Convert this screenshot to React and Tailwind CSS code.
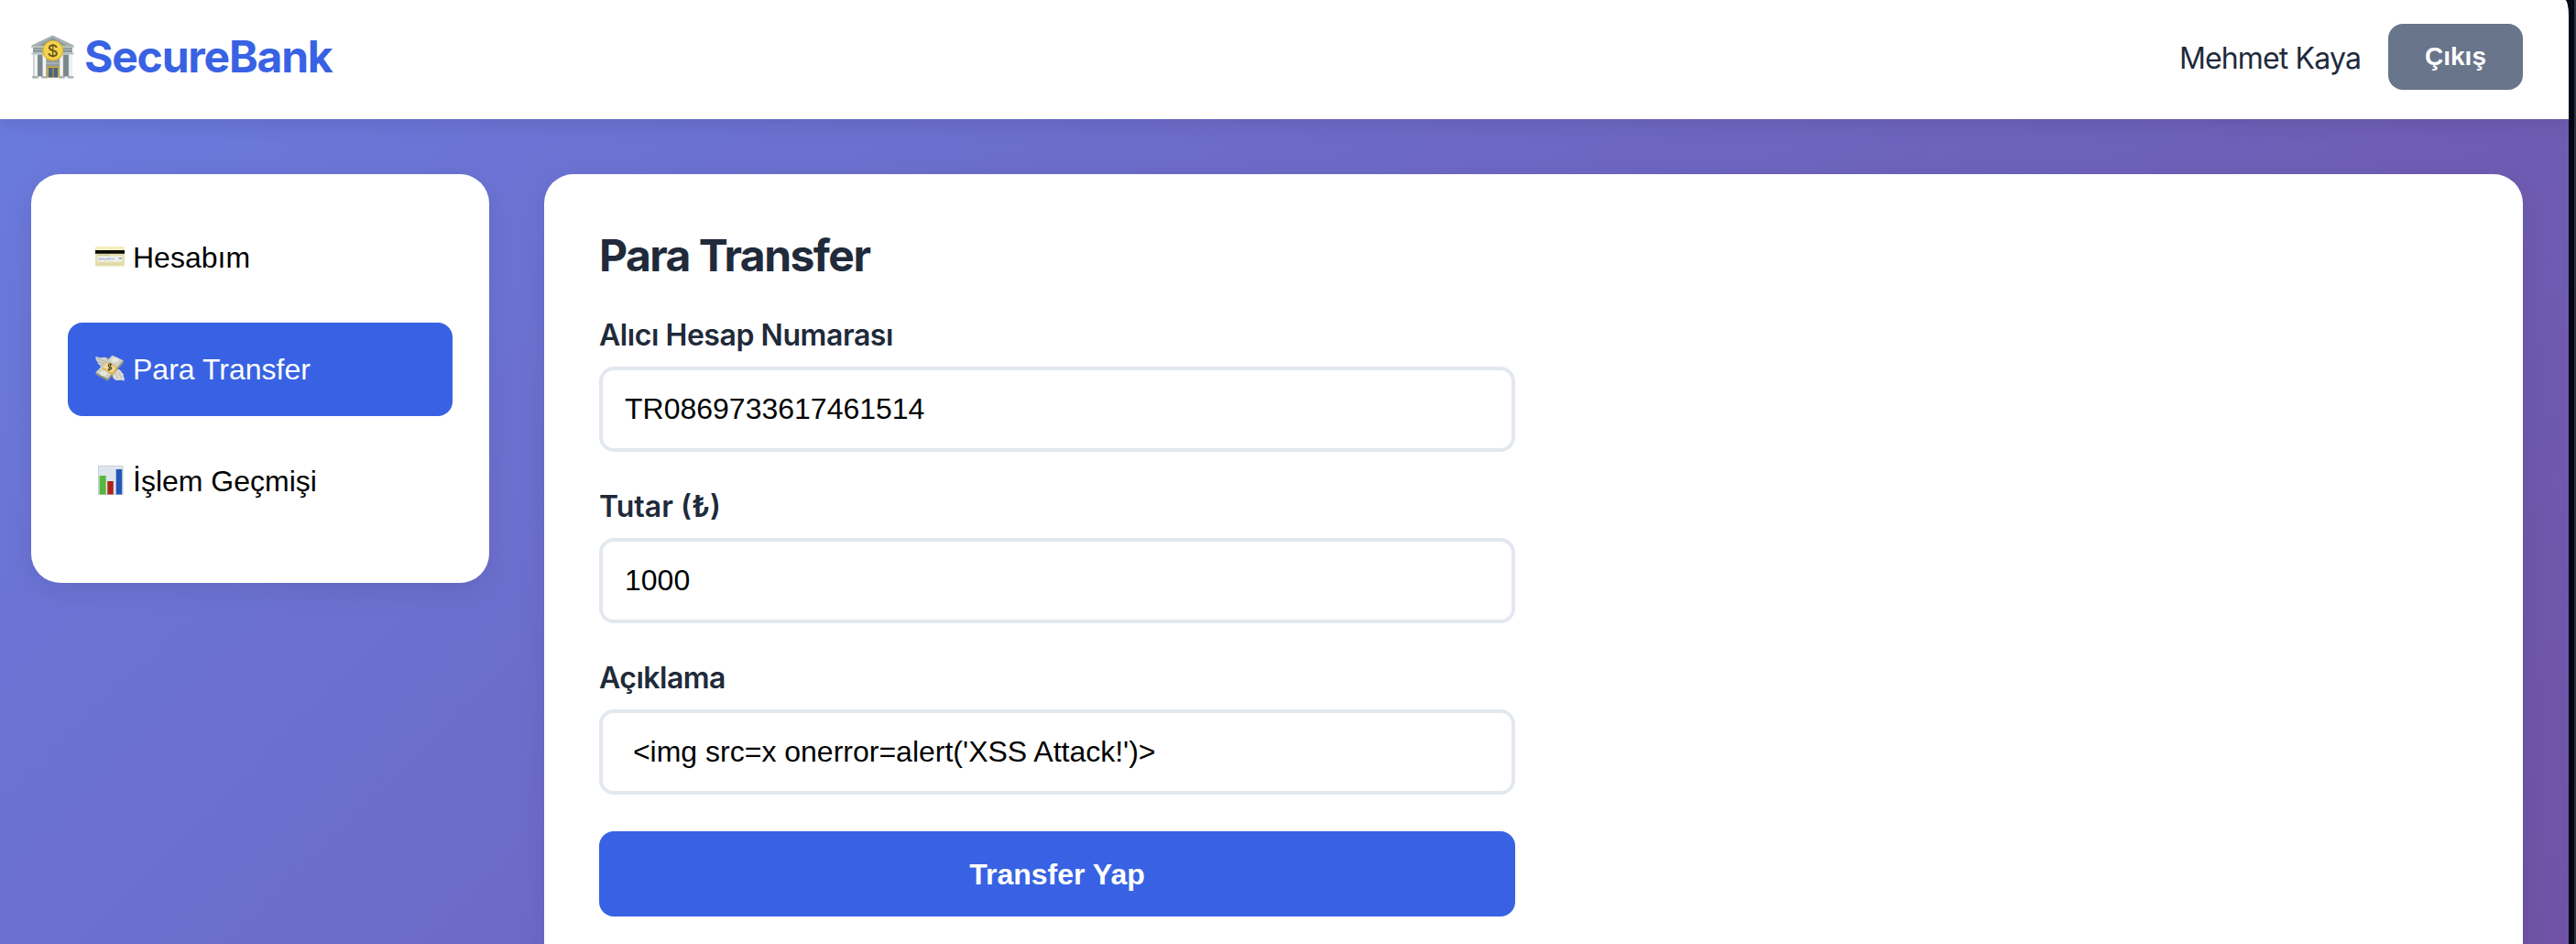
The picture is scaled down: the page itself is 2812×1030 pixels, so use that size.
const inter = "font-['Inter','Noto_Sans',sans-serif]";

function BankIcon() {
  return (
    <svg className="-mt-px h-12 w-[47px] shrink-0" viewBox="0 0 47 48">
      <path d="M23.500 0.500 46.500 11.500V14H0.500V11.500Z" fill="#a3b0af" />
      <path d="M23.500 3.500 38.500 11.500H8.500Z" fill="#84949a" />
      <path d="M0.500 12.500H46.500V14H0.500Z" fill="#c0c9c7" />
      <rect x="2" y="14" width="43" height="5.500" fill="#8a989b" />
      <rect x="2" y="15.500" width="43" height="1.200" fill="#a8b4b4" />
      <rect x="0.500" y="19.500" width="46" height="2" fill="#b6c0be" />
      <rect x="2.500" y="21.500" width="42" height="24" fill="#8f9c9f" />
      <rect x="7.500" y="22" width="4.500" height="23" fill="#7a888d" />
      <rect x="35.500" y="22" width="5" height="23" fill="#7a888d" />
      <rect x="17" y="30" width="13" height="2" fill="#a5b1b2" />
      <rect x="3.300" y="21.500" width="3.600" height="24" fill="#f2f4f2" />
      <rect x="12.700" y="21.500" width="3.600" height="24" fill="#f2f4f2" />
      <rect x="31.200" y="21.500" width="3.600" height="24" fill="#f2f4f2" />
      <rect x="41.200" y="21.500" width="3.600" height="24" fill="#f2f4f2" />
      <rect x="1" y="45" width="7" height="2.500" rx="0.800" fill="#aab4b3" />
      <rect x="11" y="45" width="7" height="2.500" rx="0.800" fill="#aab4b3" />
      <rect x="30" y="45" width="7" height="2.500" rx="0.800" fill="#aab4b3" />
      <rect x="39.500" y="45" width="7" height="2.500" rx="0.800" fill="#aab4b3" />
      <rect x="17.500" y="34.500" width="13" height="12" fill="#d8a52c" />
      <rect x="19" y="36" width="4.500" height="10.500" fill="#486680" />
      <rect x="24.500" y="36" width="4.500" height="10.500" fill="#486680" />
      <circle cx="23.800" cy="17.300" r="11.300" fill="#e2b12e" />
      <circle cx="23.800" cy="17" r="10.200" fill="#f2d44f" />
      <path d="M27.800 14C27.400 12 25.800 11.400 23.700 11.400 21.400 11.400 19.900 12.500 19.900 14.200 19.900 18.200 27.900 15.900 27.900 20.200 27.900 22.100 26.200 23.100 23.700 23.100 21.200 23.100 19.600 22.100 19.400 20" fill="none" stroke="#6b5316" strokeWidth="1.900" />
      <path d="M23.700 9.700V24.800" fill="none" stroke="#6b5316" strokeWidth="1.300" />
    </svg>
  );
}

function CardIcon() {
  return (
    <svg className="h-8 w-8 shrink-0" viewBox="0 0 32 32">
      <rect y="4" width="32" height="21.500" rx="1.500" fill="#e6dfae" />
      <rect y="4" width="32" height="4" rx="1.500" fill="#f3eebd" />
      <rect y="8" width="32" height="3.800" fill="#0b0b08" />
      <rect x="2.500" y="12.800" width="13" height="0.800" fill="#c2ba8b" />
      <rect x="2.500" y="14.500" width="27" height="6" fill="#eef0ec" />
      <path d="M3.500 18.500 5 16.500 6 18.500 8 16.800 9 18.200 11 17.500 12.500 18.500 14.500 16 15.500 18.300 17.500 17 19 18.200 21 16.500" fill="none" stroke="#7d93c9" strokeWidth="0.800" />
      <rect x="25.500" y="16.200" width="3.500" height="1.400" fill="#8992a0" />
      <path d="M3 23H16M20 23H29" stroke="#d5cd99" strokeWidth="0.800" />
    </svg>
  );
}

function MoneyIcon() {
  return (
    <svg className="h-8 w-8 shrink-0" viewBox="0 0 32 32">
      <path d="M0.500 1.800C4 3.300 6 3.800 9 2.800 12 2.300 14.500 4.300 14.500 7.300L9 14.300C6 13.800 4.500 12.300 5 11.300 3 10.300 2 9.300 3 8.300 1 6.800 0 4.300 0.500 1.800Z" fill="#d0d1cb" />
      <path d="M2 4.300 11 7.300M3.500 8.300 10 9.300M5.500 11.300 10 11.300" stroke="#a5a89f" strokeWidth="0.700" />
      <path d="M31.500 28.800C28 26.800 26 28.800 23 27.800 20 27.300 18.500 24.300 19 21.800L24 15.800C27 16.300 29 17.800 28.500 19.300 30.500 20.300 31.500 21.800 30.500 23.300 32 24.800 32 26.800 31.500 28.800Z" fill="#dcdcd6" />
      <path d="M22 20 25 26.300M25 18.500 29 26" stroke="#aeb0a7" strokeWidth="0.700" />
      <path d="M18.500 0.800 30.500 6.300 31 8.800 13.500 28.800 0.500 21.800V19.300Z" fill="#8b9084" />
      <path d="M18.500 0.800 30.500 6.300 13.500 26.300 0.500 19.300Z" fill="#cdd0c2" />
      <ellipse cx="21.500" cy="5.600" rx="4.200" ry="2.900" fill="#e5e6dc" />
      <ellipse cx="9" cy="20.300" rx="4.200" ry="2.900" fill="#e5e6dc" />
      <path d="M11.500 7.300 23.500 13V16.500L19 22.500 8 15.500Z" fill="#e0b54e" />
      <path d="M11.800 8.800 22.500 14 18.500 19.500 8.800 14Z" fill="#efdca5" />
      <path d="M17.800 11C16 9.300 13.500 10.800 14.500 12.800 15.500 14.300 17.200 12.800 17.800 14.300 18.200 16.200 15.500 17.300 13.800 15.500M17 9.500 14.800 17.500" fill="none" stroke="#5a4718" strokeWidth="1.200" />
    </svg>
  );
}

function ChartIcon() {
  return (
    <svg className="-mt-0.5 h-8 w-8 shrink-0" viewBox="0 0 32 32">
      <rect x="3" y="0" width="27.500" height="32" fill="#c6d0da" />
      <rect x="4" y="1" width="25.500" height="30" fill="#dde6ee" />
      <rect x="4.600" y="11" width="7" height="20.500" fill="#55b83c" />
      <rect x="13.300" y="17" width="6.500" height="14.500" fill="#b02318" />
      <rect x="22.700" y="4" width="6.500" height="27.500" fill="#2457b8" />
    </svg>
  );
}

const navItems = [
  { label: "Hesabım", Icon: CardIcon },
  { label: "Para Transfer", Icon: MoneyIcon, active: true },
  { label: "İşlem Geçmişi", Icon: ChartIcon },
];

const fields = [
  { label: "Alıcı Hesap Numarası", value: "TR0869733617461514", tracking: "tracking-[-0.44px]" },
  { label: "Tutar (₺)", value: "1000", tracking: "tracking-normal" },
  { label: "Açıklama", value: " <img src=x onerror=alert('XSS Attack!')>", tracking: "tracking-[-0.5px]" },
];

function Header() {
  return (
    <header className="relative flex h-[130px] shrink-0 items-start justify-between bg-white pr-[50px] pl-[34px] shadow-[0_4px_20px_rgba(0,0,0,0.1)]">
      <div className="flex items-center gap-[11px] pt-[33px]">
        <BankIcon />
        <span className="text-[48px] leading-[58px] font-bold tracking-[-1.2px] text-[#3862e3]">SecureBank</span>
      </div>
      <div className="flex items-center gap-[30px] pt-[26px]">
        <span className="pt-[3px] text-[32px] leading-[48px] tracking-[-0.85px] text-[#202a3a]">Mehmet Kaya</span>
        <button className="h-[72px] w-[147px] rounded-2xl bg-[#68758b] font-['Liberation_Sans',Arial,sans-serif] text-[28px] font-bold text-white">
          Çıkış
        </button>
      </div>
    </header>
  );
}

function Sidebar() {
  return (
    <nav className="flex h-[446px] w-[500px] shrink-0 flex-col gap-5 rounded-[32px] bg-white p-10 font-['Liberation_Sans',Arial,sans-serif] shadow-[0_8px_30px_rgba(0,0,0,0.08)]">
      {navItems.map(({ label, Icon, active }) => (
        <button
          key={label}
          className={
            "flex h-[102px] items-center gap-[9px] rounded-2xl px-[30px] text-left text-[32px] leading-[38px] " +
            (active ? "bg-[#3862e3] text-white" : "text-black")
          }
        >
          <Icon />
          <span>{label}</span>
        </button>
      ))}
    </nav>
  );
}

function TransferForm() {
  return (
    <main className="h-[1100px] flex-1 rounded-[32px] bg-white p-[60px] shadow-[0_8px_30px_rgba(0,0,0,0.08)]">
      <h2 className="text-[48px] leading-[58px] font-bold tracking-[-1.55px] text-[#202a3a]">Para Transfer</h2>
      <form className="mt-[38px] flex w-[1000px] flex-col">
        {fields.map(({ label, value, tracking }) => (
          <label key={label} className="flex h-[187px] flex-col">
            <span className={"text-[32px] leading-[39px] font-semibold text-[#202a3a] " + tracking}>{label}</span>
            <input
              type="text"
              defaultValue={value}
              className="mt-[15px] h-[93px] w-full rounded-2xl border-4 border-[#e3e8ef] bg-white px-6 font-['Liberation_Sans',Arial,sans-serif] text-[32px] text-black"
            />
          </label>
        ))}
        <button
          type="button"
          className="h-[93px] w-full rounded-2xl bg-[#3862e3] font-['Liberation_Sans',Arial,sans-serif] text-[32px] font-bold text-white"
        >
          Transfer Yap
        </button>
      </form>
    </main>
  );
}

export default function App() {
  return (
    <div className={"flex h-[1030px] w-[2812px] overflow-hidden bg-[#040714] " + inter}>
      <div className="h-[1030px] w-[2804px] overflow-hidden rounded-tr-[4px_18px]">
        <div className="flex h-[1370px] flex-col bg-[linear-gradient(135deg,#6a7bdf_0%,#704fa0_100%)]">
          <Header />
          <div className="flex items-start gap-[60px] pt-[60px] pr-[50px] pl-[34px]">
            <Sidebar />
            <TransferForm />
          </div>
        </div>
      </div>
      <div className="ml-auto h-full w-[2px] bg-[#2f303b]" />
    </div>
  );
}
